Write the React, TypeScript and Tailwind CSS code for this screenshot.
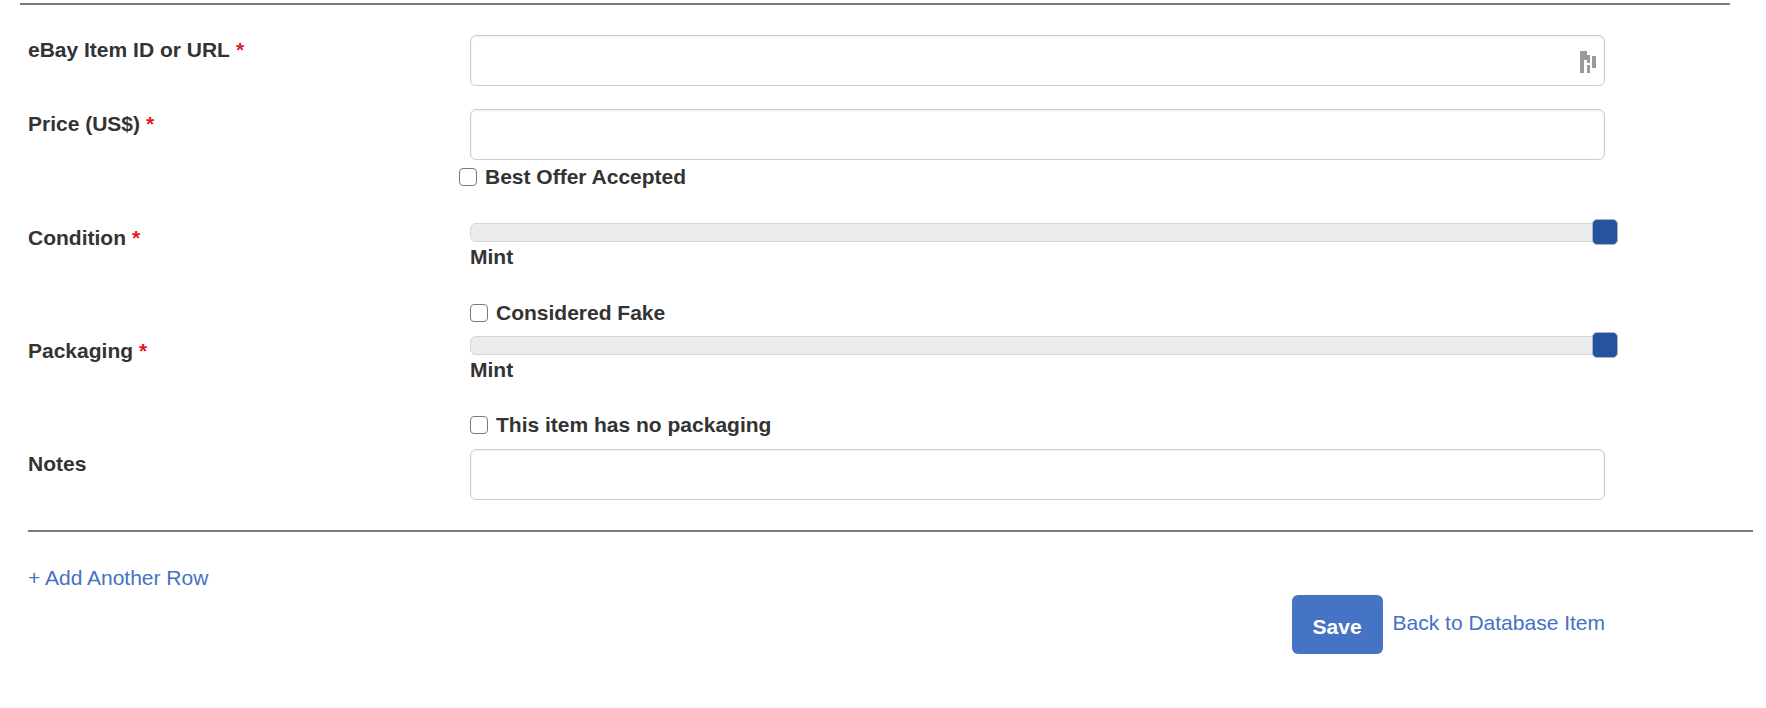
import React from "react";

const font = "font-['Liberation_Sans',Arial,Helvetica,sans-serif]";

function Label({ text, required }: { text: string; required?: boolean }) {
  return (
    <div className="w-[470px] shrink-0 pl-[28px] font-bold leading-[30px]">
      {text}
      {required && <span className="ml-[6px] text-[#e8161b]">*</span>}
    </div>
  );
}

function TextInput({ icon }: { icon?: boolean }) {
  return (
    <div className="relative h-[51px] w-[1135px] rounded-[6px] border border-[#cccccc] bg-white shadow-[inset_0_1px_2px_rgba(0,0,0,0.08)]">
      {icon && (
        <svg
          className="absolute right-[8px] top-[15px]"
          width="16"
          height="22"
          viewBox="0 0 16 22"
        >
          <rect x="0" y="0" width="4" height="22" fill="#9a9a9a" />
          <rect x="4" y="0" width="3" height="9" fill="#9a9a9a" />
          <rect x="7" y="4" width="3" height="8" fill="#9a9a9a" />
          <rect x="7" y="14" width="3" height="8" fill="#9a9a9a" />
          <rect x="12" y="5" width="4" height="12" fill="#9a9a9a" />
        </svg>
      )}
    </div>
  );
}

function Check({ label, offset }: { label: string; offset?: boolean }) {
  return (
    <div
      className={
        "flex items-center gap-[8px] font-bold leading-[30px] " +
        (offset ? "-ml-[11px]" : "")
      }
    >
      <span className="h-[18px] w-[18px] rounded-[4px] border-[1.5px] border-[#7a7a7a] bg-white" />
      <span>{label}</span>
    </div>
  );
}

function Slider({ value }: { value: string }) {
  return (
    <div className="w-[1135px]">
      <div className="relative h-[19px] rounded-[6px] border border-[#d6d6d6] bg-[#ececec]">
        <div className="absolute -right-[14px] -top-[5px] h-[26px] w-[26px] rounded-[5px] border border-[#aab4c6] bg-[#2553a0]" />
      </div>
      <div className="font-bold leading-[30px]">{value}</div>
    </div>
  );
}

export default function App() {
  return (
    <div
      className={
        "h-[708px] w-[1766px] overflow-hidden bg-white text-[21px] text-[#333333] " +
        font
      }
    >
      <div className="pl-[20px] pt-[3px]">
        <div className="h-[2px] w-[1710px] bg-[#7b7b7b]" />
      </div>

      {/* eBay item */}
      <div className="mt-[30px] flex">
        <Label text="eBay Item ID or URL" required />
        <TextInput icon />
      </div>

      {/* price */}
      <div className="mt-[23px] flex">
        <Label text="Price (US$)" required />
        <div>
          <TextInput />
          <div className="mt-[2px]">
            <Check label="Best Offer Accepted" offset />
          </div>
        </div>
      </div>

      {/* condition */}
      <div className="mt-[31px] flex">
        <Label text="Condition" required />
        <div>
          <Slider value="Mint" />
          <div className="mt-[26px]">
            <Check label="Considered Fake" />
          </div>
        </div>
      </div>

      {/* packaging */}
      <div className="mt-[8px] flex">
        <Label text="Packaging" required />
        <div>
          <Slider value="Mint" />
          <div className="mt-[25px]">
            <Check label="This item has no packaging" />
          </div>
        </div>
      </div>

      {/* notes */}
      <div className="mt-[9px] flex">
        <Label text="Notes" />
        <TextInput />
      </div>

      <div className="mt-[30px] pl-[28px]">
        <div className="h-[2px] w-[1725px] bg-[#7b7b7b]" />
      </div>

      <div className="mt-[31px] pl-[28px] leading-[30px] text-[#4372c4]">
        + Add Another Row
      </div>

      <div className="mt-[2px] flex w-[1605px] items-center justify-end gap-[10px]">
        <button className="h-[59px] w-[91px] rounded-[6px] bg-[#4574c4] pt-[4px] font-bold text-white">
          Save
        </button>
        <span className="-mt-[4px] text-[#4372c4]">Back to Database Item</span>
      </div>
    </div>
  );
}
